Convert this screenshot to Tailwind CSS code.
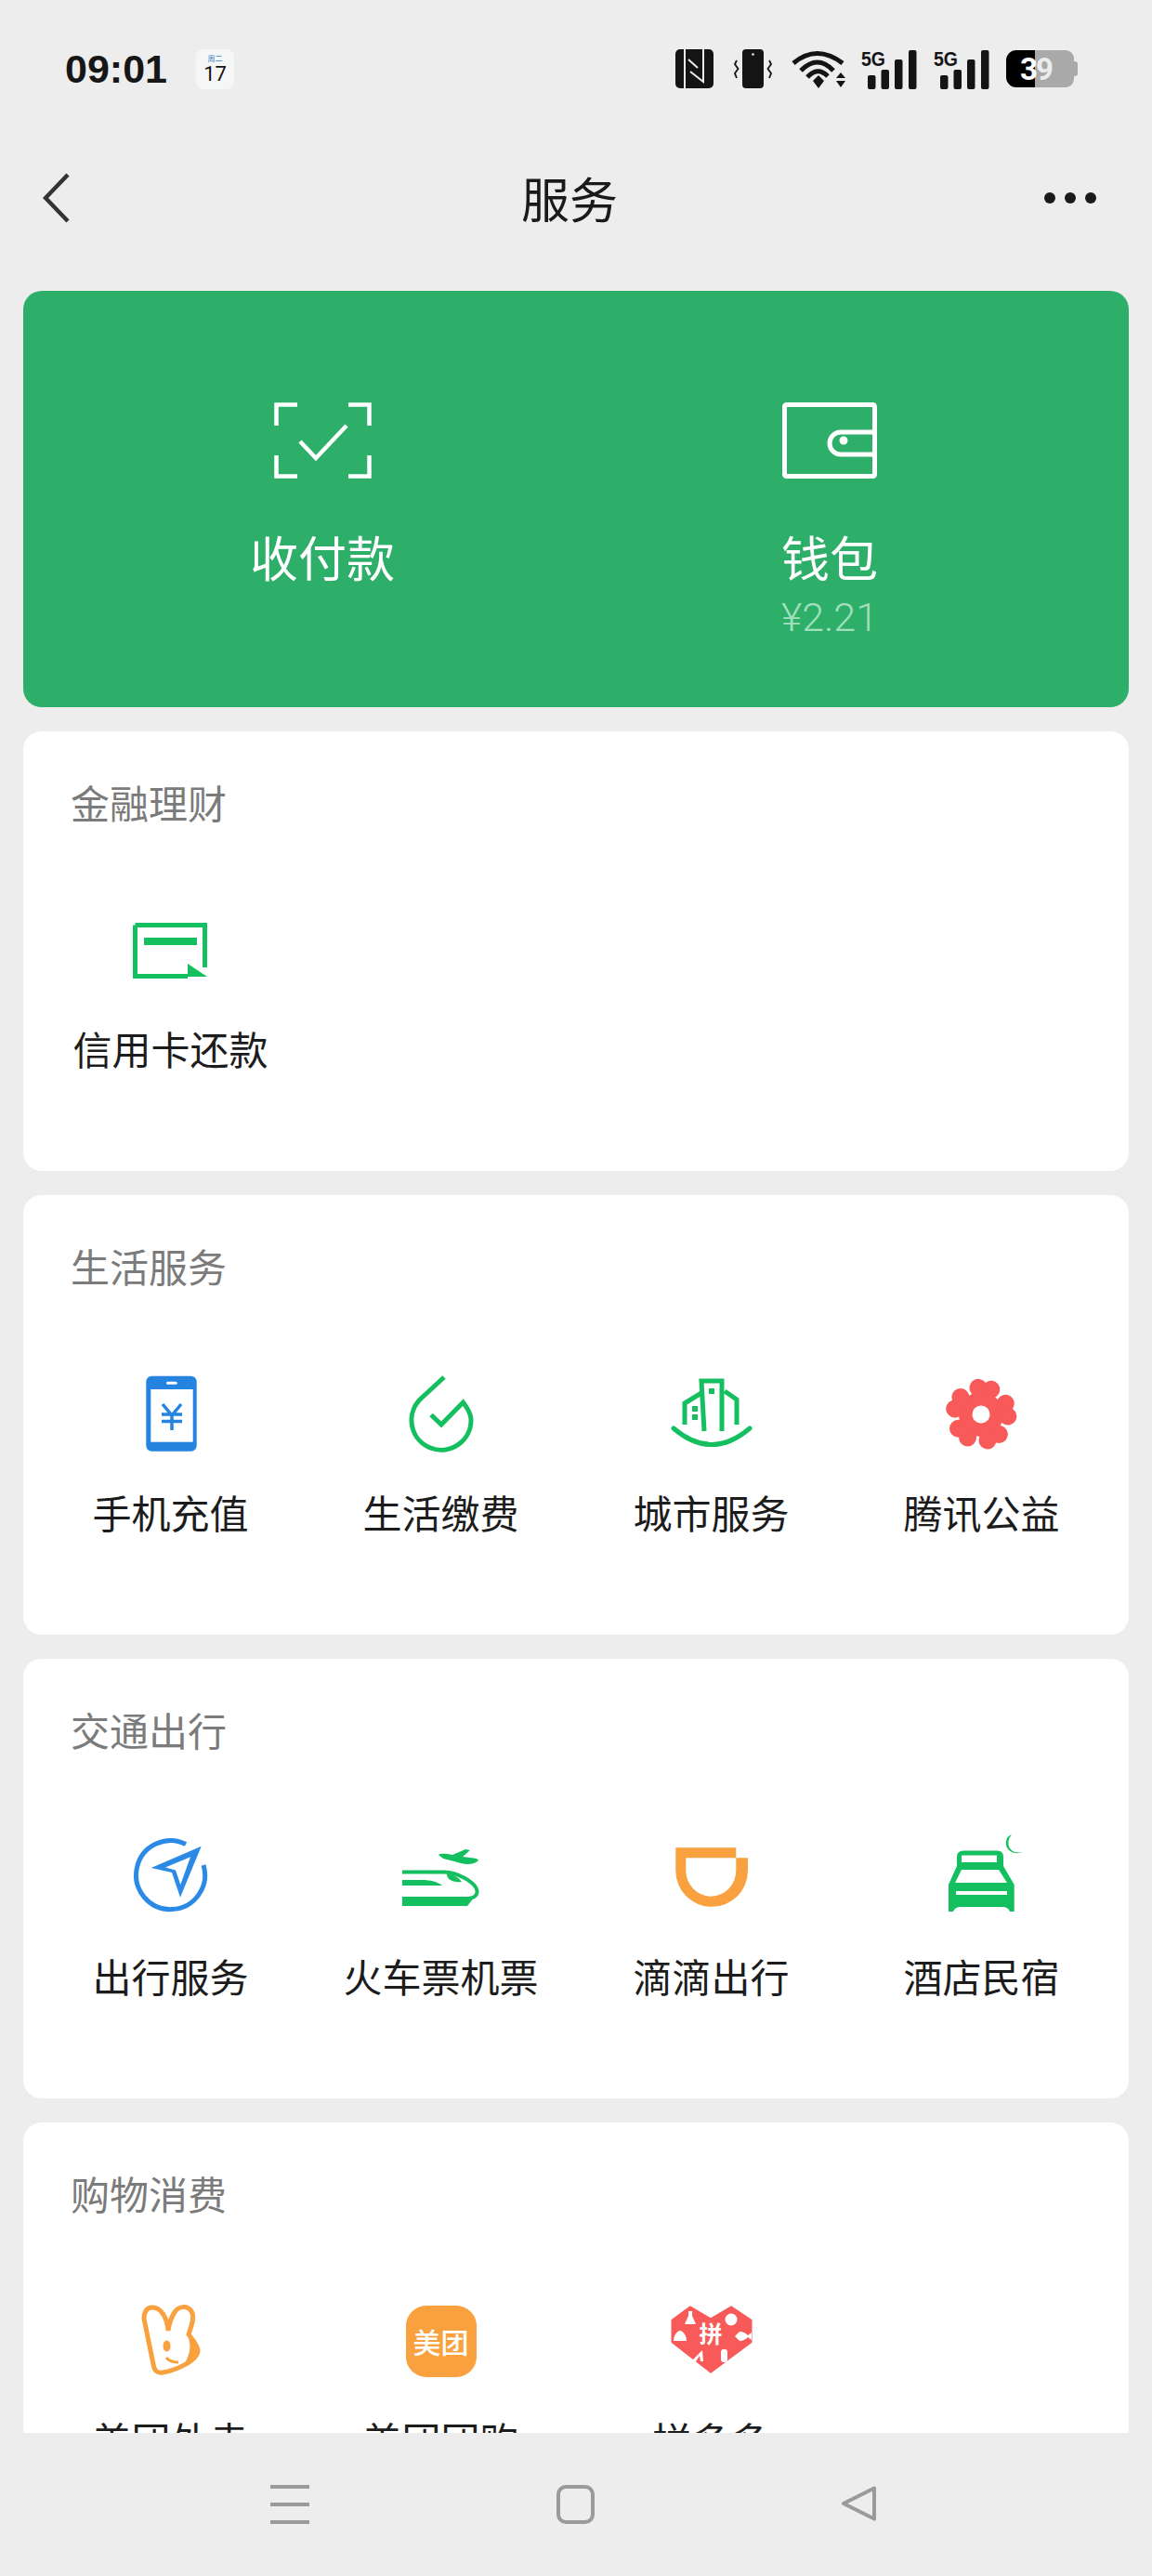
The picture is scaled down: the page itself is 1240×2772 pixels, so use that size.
<!DOCTYPE html>
<html lang="zh">
<head>
<meta charset="utf-8">
<script src="https://cdn.jsdelivr.net/npm/@tailwindcss/browser@4"></script>
</head>
<body>
<div class="w-[1240px] h-[2772px] flex flex-col bg-[#ededed] overflow-hidden font-['Noto_Sans_CJK_SC',sans-serif]">

  <!-- status bar -->
  <div class="h-[148px] shrink-0 flex items-center justify-between pl-[70px] pr-[79px]">
    <div class="flex items-center">
      <span class="w-[141px] text-[43px] leading-[44px] font-bold text-[#161616] font-['Liberation_Sans',sans-serif]">09:01</span>
      <div class="w-[41px] h-[43px] rounded-lg bg-[#f5f6f6] flex flex-col items-center pt-[5px]">
        <span class="text-[8px] leading-[10px] text-[#3d85c6]">周二</span>
        <span class="text-[22px] leading-[24px] text-[#111] font-['Roboto',sans-serif]">17</span>
      </div>
    </div>
    <div class="flex items-center">
      <svg width="41" height="42" viewBox="0 0 41 42"><rect width="41" height="42" rx="5" fill="#141414"/><path d="M10 0V42M14 11L24 20M16 24L30 35V0" stroke="#ededed" stroke-width="2" fill="none"/></svg>
      <svg class="ml-[22px]" width="41" height="42" viewBox="0 0 41 42"><rect x="9" width="23" height="42" rx="4" fill="#141414"/><circle cx="20.5" cy="5.5" r="1.3" fill="#ededed"/><path d="M3 12L1 16L4.500 21L1 26L3 31M38 12L40 16L36.500 21L40 26L38 31" stroke="#141414" stroke-width="1.800" fill="none"/></svg>
      <svg class="ml-[21px]" width="58" height="42" viewBox="0 0 58 42"><path d="M2 15Q27 -6 55 15M10 23Q28 5 45 23M17 30Q28 18 39 29" stroke="#141414" stroke-width="5" fill="none"/><path d="M23 34L29 28L35 34L29 42Z" fill="#141414"/><path d="M53 25L48 31H58ZM48 34H58L53 41Z" fill="#141414"/></svg>
      <svg class="ml-[17px]" width="60" height="43" viewBox="0 0 60 43"><text x="0" y="18" font-family="Liberation Sans Narrow, Liberation Sans, sans-serif" font-weight="700" font-size="22" textLength="26" lengthAdjust="spacingAndGlyphs" fill="#141414">5G</text><rect x="7" y="28" width="8.500" height="15" rx="2" fill="#141414"/><rect x="21.500" y="22" width="8.500" height="21" rx="2" fill="#141414"/><rect x="36" y="11" width="8.500" height="32" rx="2" fill="#141414"/><rect x="51" y="1" width="8.500" height="42" rx="2" fill="#141414"/></svg>
      <svg class="ml-[18px]" width="60" height="43" viewBox="0 0 60 43"><text x="0" y="18" font-family="Liberation Sans Narrow, Liberation Sans, sans-serif" font-weight="700" font-size="22" textLength="26" lengthAdjust="spacingAndGlyphs" fill="#141414">5G</text><rect x="7" y="28" width="8.500" height="15" rx="2" fill="#141414"/><rect x="21.500" y="22" width="8.500" height="21" rx="2" fill="#141414"/><rect x="36" y="11" width="8.500" height="32" rx="2" fill="#141414"/><rect x="51" y="1" width="8.500" height="42" rx="2" fill="#141414"/></svg>
      <svg class="ml-[18px]" width="78" height="40" viewBox="0 0 78 40"><rect x="10" width="63" height="40" rx="9" fill="#a9a9a9"/><path d="M31 0H11A11 11 0 0 0 0 11V29A11 11 0 0 0 11 40H31Z" fill="#000"/><rect x="71" y="12" width="6" height="16" rx="3" fill="#a9a9a9"/><text x="15" y="32" font-family="Roboto, sans-serif" font-weight="700" font-size="33" fill="#fff">3</text><text x="32" y="32" font-family="Roboto, sans-serif" font-weight="700" font-size="33" fill="#ececec">9</text></svg>
    </div>
  </div>

  <!-- nav bar -->
  <div class="h-[130px] shrink-0 grid grid-cols-[1fr_auto_1fr] items-center pl-[46px] pr-[60px]">
    <svg width="30" height="54" viewBox="0 0 30 54"><path d="M27 2L3 27L27 52" stroke="#333" stroke-width="4.500" fill="none"/></svg>
    <span class="text-[52px] leading-[60px] text-[#1a1a1a]">服务</span>
    <div class="flex justify-end gap-[10px]">
      <span class="w-[12px] h-[12px] rounded-full bg-[#1a1a1a]"></span>
      <span class="w-[12px] h-[12px] rounded-full bg-[#1a1a1a]"></span>
      <span class="w-[12px] h-[12px] rounded-full bg-[#1a1a1a]"></span>
    </div>
  </div>

  <!-- scrolling content -->
  <div class="flex-1 min-h-0 overflow-hidden px-[25px] pt-[35px] flex flex-col gap-[26px]">

    <div class="h-[448px] shrink-0 rounded-[20px] bg-[#2dae69] px-[49px] grid grid-cols-2">
      <div class="flex flex-col items-center pt-[120px]">
        <svg width="105" height="82" viewBox="0 0 105 82" fill="none" stroke="#fff" stroke-width="4.500"><path d="M2.500 25V2.500H25M80 2.500H102.500V25M2.500 57V79.500H25M80 79.500H102.500V57"/><path d="M28 42L45 60L78 25"/></svg>
        <span class="mt-[54px] text-[52px] leading-[60px] text-white">收付款</span>
      </div>
      <div class="flex flex-col items-center pt-[120px]">
        <svg width="102" height="82" viewBox="0 0 102 82" fill="none" stroke="#fff" stroke-width="5"><rect x="2.500" y="2.500" width="97" height="77" rx="2"/><path d="M98 32H63A12 12 0 0 0 63 56H98"/><circle cx="66" cy="41" r="4.500" fill="#fff" stroke="none"/></svg>
        <span class="mt-[54px] text-[52px] leading-[60px] text-white">钱包</span>
        <span class="mt-[10px] text-[43px] leading-[50px] font-light text-[#a2e0bd] font-['Roboto',sans-serif]">¥2.21</span>
      </div>
    </div>

    <!-- 金融理财 -->
    <div class="h-[473px] shrink-0 rounded-[20px] bg-white px-[13px] pt-[50px]">
      <div class="pl-[38px] text-[42px] leading-[52px] text-[#7b7b7b]">金融理财</div>
      <div class="mt-[89px] grid grid-cols-4">
        <div class="flex flex-col items-center">
          <svg class="overflow-visible" width="88" height="88" viewBox="0 0 88 88"><path d="M5.500 17.500H80.500V63M62 72.500H5.500V17.500" fill="none" stroke="#14bf5f" stroke-width="5"/><rect x="15" y="31" width="57" height="8" fill="#14bf5f"/><path d="M62 59L83 73H62Z" fill="#14bf5f"/></svg>
          <span class="mt-[36px] text-[42px] leading-[52px] text-[#1c1c1c] whitespace-nowrap">信用卡还款</span>
        </div>
      </div>
    </div>

    <!-- 生活服务 -->
    <div class="h-[473px] shrink-0 rounded-[20px] bg-white px-[13px] pt-[50px]">
      <div class="pl-[38px] text-[42px] leading-[52px] text-[#7b7b7b]">生活服务</div>
      <div class="mt-[89px] grid grid-cols-4">
        <div class="flex flex-col items-center">
          <svg class="overflow-visible" width="88" height="88" viewBox="0 0 88 88"><rect x="17.300" y="3.700" width="54.400" height="81" rx="6" fill="#2484e0"/><rect x="22.300" y="18" width="45.400" height="56.700" fill="#fff"/><rect x="39" y="9.700" width="11.700" height="3" rx="1.500" fill="#fff"/><path d="M35 34L45 46L55 34M34 45H56M34 52.500H56M45 46V62" fill="none" stroke="#2484e0" stroke-width="3.500"/></svg>
          <span class="mt-[36px] text-[42px] leading-[52px] text-[#1c1c1c] whitespace-nowrap">手机充值</span>
        </div>
        <div class="flex flex-col items-center">
          <svg class="overflow-visible" width="88" height="88" viewBox="0 0 88 88"><path d="M47 5L21 29A32 32 0 1 0 76 51C76 45 72 38 67.500 32L44 56L33 45.500" fill="none" stroke="#14bf5f" stroke-width="5"/></svg>
          <span class="mt-[36px] text-[42px] leading-[52px] text-[#1c1c1c] whitespace-nowrap">生活缴费</span>
        </div>
        <div class="flex flex-col items-center">
          <svg class="overflow-visible" width="88" height="88" viewBox="0 0 88 88"><path d="M3 60Q44 95 85 60" fill="none" stroke="#14bf5f" stroke-width="5" stroke-linecap="round"/><path d="M36 63L33 9H55V63" fill="none" stroke="#14bf5f" stroke-width="5"/><path d="M15 56V33L33 22M58 20L71 29V56" fill="none" stroke="#14bf5f" stroke-width="5"/><rect x="41" y="17" width="6" height="6" fill="#14bf5f"/><rect x="23" y="36" width="6" height="6" fill="#14bf5f"/><rect x="23" y="45" width="6" height="6" fill="#14bf5f"/></svg>
          <span class="mt-[36px] text-[42px] leading-[52px] text-[#1c1c1c] whitespace-nowrap">城市服务</span>
        </div>
        <div class="flex flex-col items-center">
          <svg class="overflow-visible" width="88" height="88" viewBox="0 0 88 88"><g fill="#f85959"><circle cx="43" cy="45" r="24"/><g transform="rotate(8 43 45)"><circle cx="36" cy="17" r="9.500"/><circle cx="50" cy="17" r="9.500"/></g><g transform="rotate(80 43 45)"><circle cx="36" cy="17" r="9.500"/><circle cx="50" cy="17" r="9.500"/></g><g transform="rotate(152 43 45)"><circle cx="36" cy="17" r="9.500"/><circle cx="50" cy="17" r="9.500"/></g><g transform="rotate(224 43 45)"><circle cx="36" cy="17" r="9.500"/><circle cx="50" cy="17" r="9.500"/></g><g transform="rotate(296 43 45)"><circle cx="36" cy="17" r="9.500"/><circle cx="50" cy="17" r="9.500"/></g></g><circle cx="43" cy="45" r="9.500" fill="#fff"/></svg>
          <span class="mt-[36px] text-[42px] leading-[52px] text-[#1c1c1c] whitespace-nowrap">腾讯公益</span>
        </div>
      </div>
    </div>

    <!-- 交通出行 -->
    <div class="h-[473px] shrink-0 rounded-[20px] bg-white px-[13px] pt-[50px]">
      <div class="pl-[38px] text-[42px] leading-[52px] text-[#7b7b7b]">交通出行</div>
      <div class="mt-[89px] grid grid-cols-4">
        <div class="flex flex-col items-center">
          <svg class="overflow-visible" width="88" height="88" viewBox="0 0 88 88"><path d="M60 8.500A37 37 0 1 0 79 31" fill="none" stroke="#2a8ae6" stroke-width="5"/><path fill-rule="evenodd" d="M76.700 10.700L22.700 34L45 39L54 65.700ZM65 22.300L38 33.500L49 36.500L54.300 52Z" fill="#2a8ae6"/></svg>
          <span class="mt-[36px] text-[42px] leading-[52px] text-[#1c1c1c] whitespace-nowrap">出行服务</span>
        </div>
        <div class="flex flex-col items-center">
          <svg class="overflow-visible" width="88" height="88" viewBox="0 0 88 88"><path d="M41 20C44 18 50 19 56 20L70 14L75 15L67 22L82 24L84 26C78 32 66 30 58 27L46 24Z" fill="#14bf5f"/><path d="M2 38.500H46C60 38 83 50 82.500 60C82 67 74 67 70 67" fill="none" stroke="#14bf5f" stroke-width="4"/><path d="M50 41C56 40 62 44 66 49C58 50 50 47 50 41Z" fill="#14bf5f"/><path d="M2 47H24C32 47 40 49 45 53H2Z" fill="#14bf5f"/><path d="M2 65H80L72 75H2Z" fill="#14bf5f"/></svg>
          <span class="mt-[36px] text-[42px] leading-[52px] text-[#1c1c1c] whitespace-nowrap">火车票机票</span>
        </div>
        <div class="flex flex-col items-center">
          <svg class="overflow-visible" width="88" height="88" viewBox="0 0 88 88"><path fill-rule="evenodd" d="M5.300 12.300H70.300V23.300H83V37A38.800 38.800 0 0 1 5.300 37ZM16.300 23.300V37A27 27.700 0 0 0 70.300 37V23.300Z" fill="#f9a13e"/></svg>
          <span class="mt-[36px] text-[42px] leading-[52px] text-[#1c1c1c] whitespace-nowrap">滴滴出行</span>
        </div>
        <div class="flex flex-col items-center">
          <svg class="overflow-visible" width="88" height="88" viewBox="0 0 88 88"><path fill-rule="evenodd" d="M8 81V52L17 32V22Q17 15.500 24 15.500H61Q67 15.500 67 22V32L78.700 52V81H74Q72 76 66 76H21Q15 76 13 81ZM22 20.500V28H60V20.500ZM22 36L15 50H71L62 36ZM16 59V63H71V59Z" fill="#14bf5f"/><path d="M76 -2C68 8 74 20 88 17C78 21 66 14 71 2C72 0 74 -1 76 -2Z" fill="#14bf5f"/></svg>
          <span class="mt-[36px] text-[42px] leading-[52px] text-[#1c1c1c] whitespace-nowrap">酒店民宿</span>
        </div>
      </div>
    </div>

    <!-- 购物消费 -->
    <div class="h-[473px] shrink-0 rounded-[20px] bg-white px-[13px] pt-[50px]">
      <div class="pl-[38px] text-[42px] leading-[52px] text-[#7b7b7b]">购物消费</div>
      <div class="mt-[89px] grid grid-cols-4">
        <div class="flex flex-col items-center">
          <svg class="overflow-visible" width="88" height="88" viewBox="0 0 88 88"><path d="M41 33C40 20 34 8 24 8C17 8 15 14 15 20L25 69C26 76 29 79 35 78C48 76 72 66 73 55C73 48 66 42 63 37C66 28 70 18 66 12C61 5 52 7 48 13C44 19 42 26 41 33Z" fill="#fff" stroke="#f9a13e" stroke-width="5"/><path d="M63 42C70 46 75 52 74 56C72 62 66 66 60 66C64 58 66 50 63 42Z" fill="#f9a13e"/><ellipse cx="39.500" cy="49.500" rx="4" ry="6" fill="#f9a13e"/><path d="M39 62C42 66 47 67 52 67" fill="none" stroke="#f9a13e" stroke-width="3"/></svg>
          <span class="mt-[36px] text-[42px] leading-[52px] text-[#1c1c1c] whitespace-nowrap">美团外卖</span>
        </div>
        <div class="flex flex-col items-center">
          <div class="w-[88px] h-[88px] flex items-center justify-center">
            <div class="w-[76px] h-[77px] rounded-[22px] bg-[#f9a13e] flex items-center justify-center text-white text-[30px] leading-[34px] font-medium whitespace-nowrap">美团</div>
          </div>
          <span class="mt-[36px] text-[42px] leading-[52px] text-[#1c1c1c] whitespace-nowrap">美团团购</span>
        </div>
        <div class="flex flex-col items-center">
          <svg class="overflow-visible" width="88" height="88" viewBox="0 0 88 88"><path d="M21 8L43 21L65 8L86 22V45L43 77L2 45V22Z" fill="#f85959" stroke="#f85959" stroke-width="3" stroke-linejoin="round"/><text x="43" y="46" text-anchor="middle" font-family="Noto Sans CJK SC, sans-serif" font-weight="700" font-size="25" fill="#fff">拼</text><g fill="#fff"><path d="M19 12H23V17L27 26H15L19 17Z"/><circle cx="65" cy="21" r="6.500"/><path d="M3 44C3 38 7 33 10 33C13 33 17 38 17 44Z"/><path d="M69 39L74 34C78 34 81 36 83 38L87 35V43L83 40C81 42 78 44 74 44Z"/><path d="M22 66L34 54L35 66H32L31 60L27 66Z"/><rect x="54" y="53" width="7" height="14" rx="3"/></g></svg>
          <span class="mt-[36px] text-[42px] leading-[52px] text-[#1c1c1c] whitespace-nowrap">拼多多</span>
        </div>
      </div>
    </div>
  </div>

  <!-- system navigation -->
  <div class="h-[154px] shrink-0 bg-[#ededed] flex items-start pt-[56px] pl-[291px]">
    <div class="w-[42px] h-[42px] flex flex-col justify-between">
      <span class="h-[4px] bg-[#9a9a9a]"></span>
      <span class="h-[4px] bg-[#9a9a9a]"></span>
      <span class="h-[4px] bg-[#9a9a9a]"></span>
    </div>
    <div class="ml-[266px] w-[41px] h-[42px] rounded-[10px] border-[4px] border-[#9a9a9a]"></div>
    <svg class="ml-[265px]" width="40" height="40" viewBox="0 0 40 40"><path d="M36 3.500L3 20L36 36.500Z" fill="none" stroke="#9a9a9a" stroke-width="4" stroke-linejoin="round"/></svg>
  </div>
</div>
</body>
</html>
